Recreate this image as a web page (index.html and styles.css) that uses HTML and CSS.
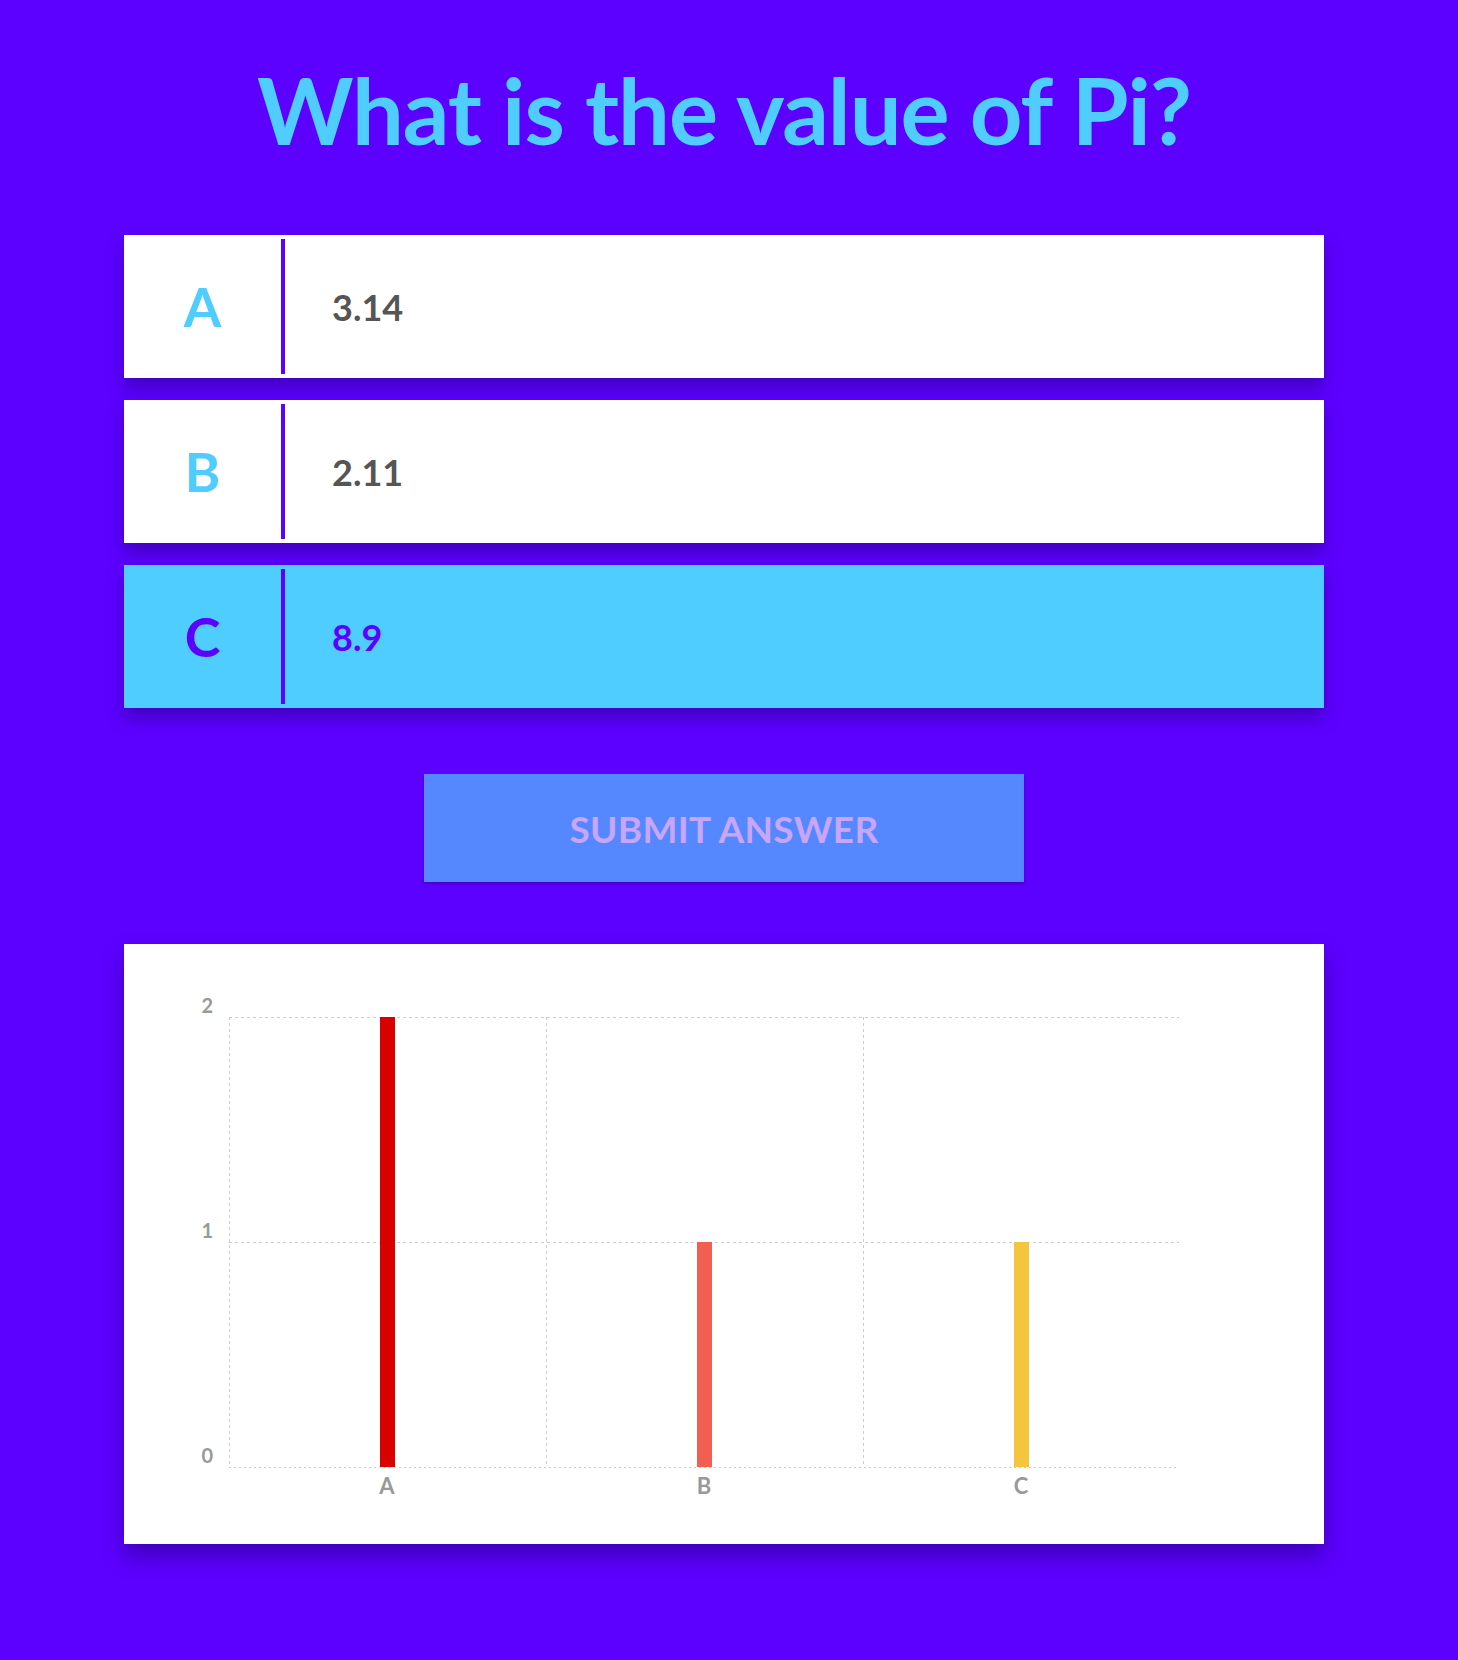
FILE: index.html
```html
<!DOCTYPE html>
<html lang="en">
<head>
<meta charset="utf-8">
<title>Quiz</title>
<link rel="stylesheet" href="styles.css">
</head>
<body>
<main class="page">
  <h1 class="question">What is the value of Pi?</h1>

  <ul class="answers">
    <li class="answer">
      <span class="answer-letter">A</span>
      <span class="answer-text">3.14</span>
    </li>
    <li class="answer">
      <span class="answer-letter">B</span>
      <span class="answer-text">2.11</span>
    </li>
    <li class="answer answer-selected">
      <span class="answer-letter">C</span>
      <span class="answer-text">8.9</span>
    </li>
  </ul>

  <div class="actions">
    <button class="submit" type="button">SUBMIT ANSWER</button>
  </div>

  <section class="chart-card">
    <svg class="chart" width="1200" height="600" viewBox="0 0 1200 600">
      <g class="grid">
        <line x1="105" y1="73" x2="1055" y2="73"/>
        <line x1="105" y1="298" x2="1055" y2="298"/>
        <line x1="105" y1="73" x2="105" y2="523"/>
        <line x1="422" y1="73" x2="422" y2="523"/>
        <line x1="739" y1="73" x2="739" y2="523"/>
        <line class="axis" x1="105" y1="523" x2="1055" y2="523"/>
      </g>
      <g class="ylabels">
        <text x="89" y="69">2</text>
        <text x="89" y="294">1</text>
        <text x="89" y="519">0</text>
      </g>
      <rect class="bar-a" x="256" y="73" width="15" height="450"/>
      <rect class="bar-b" x="573" y="298" width="15" height="225"/>
      <rect class="bar-c" x="890" y="298" width="15" height="225"/>
      <g class="xlabels">
        <text x="263" y="550">A</text>
        <text x="580" y="550">B</text>
        <text x="897" y="550">C</text>
      </g>
    </svg>
  </section>
</main>
</body>
</html>
```

FILE: styles.css
```css
* {
  box-sizing: border-box;
}

html, body {
  margin: 0;
  padding: 0;
}

body {
  background: #5c00ff;
  font-family: Lato, "Open Sans", "Liberation Sans", sans-serif;
  min-height: 1660px;
  padding-right: 10px;
}

.page {
  width: 1200px;
  margin: 0 auto;
  padding-bottom: 100px;
}

.question {
  margin: 55px 0 70px;
  font-size: 92px;
  line-height: 110px;
  font-weight: 700;
  color: #50cdff;
  text-align: center;
  letter-spacing: -1.1px;
}

.answers {
  list-style: none;
  margin: 0;
  padding: 0;
  display: flex;
  flex-direction: column;
  gap: 22px;
}

.answer {
  display: flex;
  align-items: stretch;
  height: 143px;
  padding: 4px 0;
  background: #ffffff;
  box-shadow: 0 10px 16px rgba(20, 0, 80, 0.35);
}

.answer-letter {
  width: 161px;
  flex: none;
  display: flex;
  align-items: center;
  justify-content: center;
  border-right: 4px solid #5c00ff;
  font-size: 54px;
  font-weight: 700;
  color: #50cdff;
}

.answer-text {
  display: flex;
  align-items: center;
  padding-left: 47px;
  font-size: 36px;
  font-weight: 700;
  color: #555555;
}

.answer-selected {
  background: #50cdff;
}

.answer-selected .answer-letter,
.answer-selected .answer-text {
  color: #5c00ff;
}

.actions {
  display: flex;
  justify-content: center;
  margin: 66px 0 62px;
}

.submit {
  width: 600px;
  height: 108px;
  border: none;
  background: #5588ff;
  color: #c8a6ff;
  font-family: Lato, "Open Sans", "Liberation Sans", sans-serif;
  font-size: 37px;
  font-weight: 700;
  letter-spacing: 0.3px;
  box-shadow: 0 2px 3px rgba(20, 0, 80, 0.3);
  cursor: pointer;
}

.chart-card {
  height: 600px;
  background: #ffffff;
  box-shadow: 0 12px 20px rgba(20, 0, 80, 0.4);
}

.chart {
  display: block;
}

.grid line {
  stroke: #cccccc;
  stroke-width: 1;
  stroke-dasharray: 3 3;
  shape-rendering: crispEdges;
}

.grid .axis {
  stroke-dasharray: 2 3;
}

.ylabels text {
  font-family: Lato, "Liberation Sans", sans-serif;
  font-size: 20px;
  font-weight: 700;
  fill: #999999;
  text-anchor: end;
}

.xlabels text {
  font-family: Lato, "Liberation Sans", sans-serif;
  font-size: 22px;
  font-weight: 700;
  fill: #999999;
  text-anchor: middle;
}

.bar-a { fill: #d90000; }
.bar-b { fill: #f25f50; }
.bar-c { fill: #f5c53e; }
```
